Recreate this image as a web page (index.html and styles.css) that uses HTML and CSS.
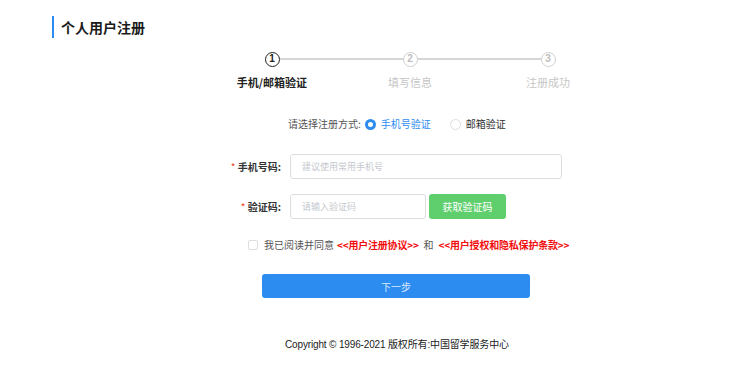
FILE: index.html
```html
<!DOCTYPE html>
<html lang="zh-CN">
<head>
<meta charset="utf-8">
<title>个人用户注册</title>
<link rel="stylesheet" href="styles.css">
</head>
<body>
<div class="page">
  <h1 class="title">个人用户注册</h1>

  <div class="steps">
    <div class="step active">
      <span class="circle">1</span>
      <span class="step-label">手机/邮箱验证</span>
    </div>
    <div class="step">
      <span class="circle">2</span>
      <span class="step-label">填写信息</span>
    </div>
    <div class="step last">
      <span class="circle">3</span>
      <span class="step-label">注册成功</span>
    </div>
  </div>

  <div class="method">
    <span class="method-label">请选择注册方式:</span>
    <label class="radio checked"><span class="radio-dot"></span>手机号验证</label>
    <label class="radio"><span class="radio-dot"></span>邮箱验证</label>
  </div>

  <div class="form-row row-phone">
    <span class="form-label"><i class="req">*</i> 手机号码:</span>
    <div class="input wide">建议使用常用手机号</div>
  </div>
  <div class="form-row row-code">
    <span class="form-label"><i class="req">*</i> 验证码:</span>
    <div class="input short">请输入验证码</div>
    <button class="btn-code" type="button">获取验证码</button>
  </div>

  <div class="agree">
    <span class="checkbox"></span>
    <span class="agree-text">我已阅读并同意</span>
    <a class="link">&lt;&lt;用户注册协议&gt;&gt;</a>
    <span class="agree-and">和</span>
    <a class="link">&lt;&lt;用户授权和隐私保护条款&gt;&gt;</a>
  </div>

  <div class="next-wrap">
    <button class="btn-next" type="button">下一步</button>
  </div>

  <footer class="footer">Copyright © 1996-2021 版权所有:中国留学服务中心</footer>
</div>
</body>
</html>
```

FILE: styles.css
```css
* { box-sizing: border-box; }
html, body { margin: 0; padding: 0; background: #fff; }
body {
  font-family: "Noto Sans CJK SC", "Noto Sans", sans-serif;
  color: #333;
  width: 737px;
  height: 386px;
  overflow: hidden;
}
.page { padding-top: 16px; }

.title {
  margin: 0 0 0 52px;
  height: 22px;
  line-height: 22px;
  border-left: 2px solid #2d8cf0;
  padding-left: 7px;
  font-size: 14px;
  font-weight: 700;
  color: #1b1b1b;
}

.steps {
  display: flex;
  height: 38px;
  margin: 14px 0 0 203px;
}
.step {
  position: relative;
  width: 138px;
  display: flex;
  flex-direction: column;
  align-items: center;
}
.step::after {
  content: "";
  position: absolute;
  top: 6px;
  left: 77px;
  width: 124px;
  height: 2px;
  background: #d6d6d6;
}
.step.last::after { display: none; }
.circle {
  width: 15px;
  height: 15px;
  border-radius: 50%;
  border: 1.5px solid #d0d0d0;
  color: #bdbdbd;
  font-family: "Liberation Sans", Arial, sans-serif;
  font-size: 10px;
  font-weight: 700;
  line-height: 12px;
  text-align: center;
}
.step-label {
  margin-top: 7px;
  height: 16px;
  font-size: 11px;
  line-height: 16px;
  color: #c6c6c6;
}
.step.active .circle { border-color: #222; color: #222; }
.step.active .step-label { color: #222; font-weight: 700; }

.method {
  display: flex;
  align-items: center;
  height: 16px;
  margin: 26px 0 0 288px;
  font-size: 10px;
  line-height: 16px;
  color: #555;
}
.method-label { margin-right: 4px; }
.radio {
  display: flex;
  align-items: center;
  margin-right: 19px;
  color: #333;
}
.radio-dot {
  width: 11px;
  height: 11px;
  border-radius: 50%;
  border: 1px solid #dcdee2;
  margin-right: 5px;
  background: #fff;
}
.radio.checked { color: #2d8cf0; }
.radio.checked .radio-dot {
  border: 3.5px solid #2d8cf0;
}

.form-row {
  display: flex;
  align-items: center;
  height: 25px;
}
.row-phone { margin-top: 22px; }
.row-code { margin-top: 15px; }
.form-label {
  width: 281px;
  text-align: right;
  font-size: 10px;
  font-weight: 700;
  color: #333;
  margin-right: 9px;
}
.req {
  font-style: normal;
  color: #ed4014;
  font-weight: 400;
}
.input {
  height: 25px;
  border: 1px solid #dcdee2;
  border-radius: 3px;
  padding-left: 11px;
  font-size: 9px;
  line-height: 23px;
  color: #c5c8ce;
}
.input.wide { width: 272px; }
.input.short { width: 136px; }
.btn-code {
  margin-left: 3px;
  width: 77px;
  height: 25px;
  border: none;
  border-radius: 3px;
  background: #5fcf6e;
  color: #fff;
  font-family: inherit;
  font-size: 10px;
  padding: 0;
}

.agree {
  display: flex;
  align-items: center;
  height: 16px;
  margin: 18px 0 0 248px;
  font-size: 10px;
  line-height: 16px;
  color: #555;
}
.checkbox {
  width: 10px;
  height: 10px;
  border: 1px solid #dcdee2;
  border-radius: 2px;
  margin-right: 6px;
}
.agree-text { margin-right: 3px; }
.link {
  color: #f20d0d;
  font-weight: 700;
  letter-spacing: -0.2px;
}
.agree-and { margin: 0 5px; }

.next-wrap { height: 24px; margin: 21px 0 0 262px; }
.btn-next {
  display: block;
  width: 268px;
  height: 24px;
  border: none;
  border-radius: 3px;
  background: #2d8cf0;
  color: #dbeafd;
  font-family: inherit;
  font-size: 10px;
  padding: 0;
}

.footer {
  height: 14px;
  margin: 40px 0 0 285px;
  font-family: "Liberation Sans", "Noto Sans CJK SC", sans-serif;
  font-size: 10px;
  line-height: 14px;
  letter-spacing: -0.15px;
  color: #222;
}
```
